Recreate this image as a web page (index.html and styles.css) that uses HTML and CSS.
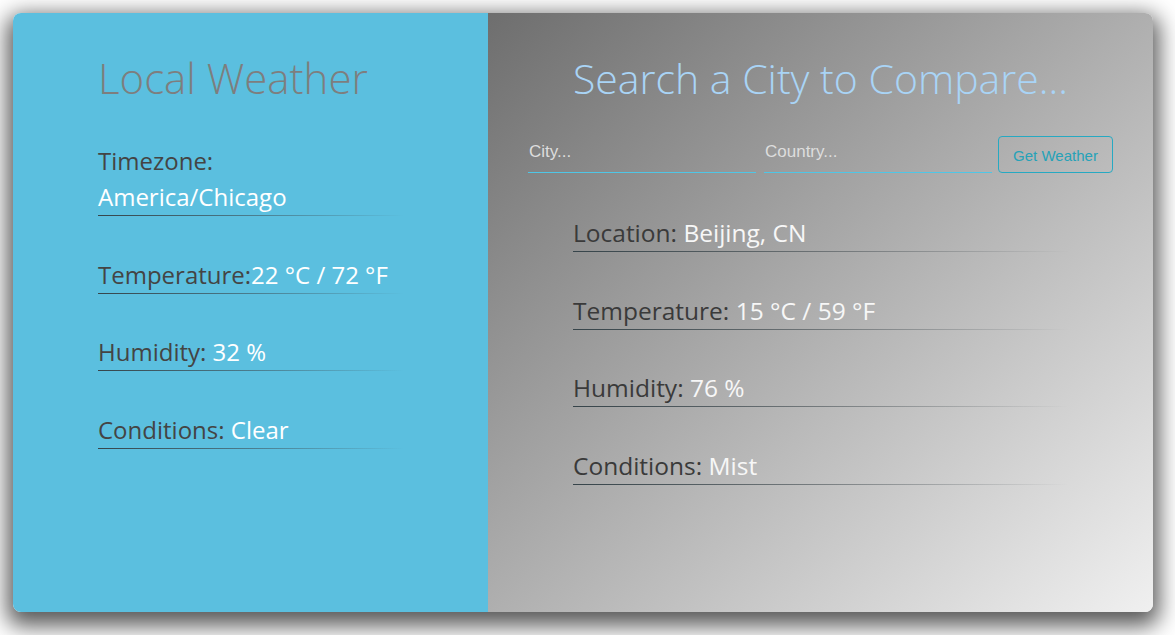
FILE: index.html
```html
<!DOCTYPE html>
<html>
<head>
<meta charset="utf-8">
<link rel="stylesheet" href="styles.css">
</head>
<body>
<div class="card">
  <section class="local">
    <h1 class="title local-title">Local Weather</h1>
    <div class="item"><span class="label">Timezone:</span><br><span class="value">America/Chicago</span></div>
    <div class="item"><span class="label">Temperature:</span><span class="value">22 °C / 72 °F</span></div>
    <div class="item"><span class="label">Humidity:</span> <span class="value">32 %</span></div>
    <div class="item"><span class="label">Conditions:</span> <span class="value">Clear</span></div>
  </section>
  <section class="compare">
    <h1 class="title compare-title">Search a City to Compare...</h1>
    <form class="search">
      <input class="field" type="text" placeholder="City...">
      <input class="field" type="text" placeholder="Country...">
      <button class="btn" type="button">Get Weather</button>
    </form>
    <div class="results">
      <div class="item item-r"><span class="label">Location:</span> <span class="value">Beijing, CN</span></div>
      <div class="item item-r"><span class="label">Temperature:</span> <span class="value">15 °C / 59 °F</span></div>
      <div class="item item-r"><span class="label">Humidity:</span> <span class="value">76 %</span></div>
      <div class="item item-r"><span class="label">Conditions:</span> <span class="value">Mist</span></div>
    </div>
  </section>
</div>
</body>
</html>
```

FILE: styles.css
```css
html, body {
  margin: 0;
  padding: 0;
  background: #ffffff;
}
body {
  box-sizing: border-box;
  height: 635px;
  padding: 13px;
  font-family: "Open Sans", "Noto Sans", sans-serif;
}
.card {
  width: 1140px;
  height: 599px;
  display: flex;
  border-radius: 8px;
  overflow: hidden;
  box-shadow: 0 8px 22px 6px rgba(0, 0, 0, 0.65);
}
.local {
  width: 475px;
  flex: none;
  box-sizing: border-box;
  background: #5bbfdf;
  padding: 41px 85px 0 85px;
}
.compare {
  flex: 1;
  box-sizing: border-box;
  background: linear-gradient(to bottom right, #6e6e6e 0%, #f0f0f0 100%);
  padding: 41px 40px 0 40px;
}
.title {
  margin: 0;
  font-weight: 300;
  font-size: 41px;
  line-height: 48px;
}
.local-title {
  color: #7e7e7e;
  font-size: 42px;
  margin-bottom: 41px;
}
.compare-title {
  color: #a9d4f6;
  text-align: center;
  margin-bottom: 34px;
}
.item {
  font-size: 24px;
  line-height: 36px;
  border-bottom: 1px solid;
  border-image: linear-gradient(to right, #36444a 0%, rgba(60, 70, 75, 0.55) 50%, rgba(60, 70, 75, 0) 100%) 1;
  margin-bottom: 40.5px;
}
.label {
  color: #444444;
}
.value {
  color: #ffffff;
}
.search {
  display: flex;
  align-items: flex-end;
  margin: 0;
}
.field {
  width: 228px;
  flex: none;
  height: 36px;
  box-sizing: border-box;
  background: transparent;
  border: none;
  border-bottom: 1px solid #4fc6e6;
  padding: 0 1px 5px 1px;
  font-family: "Liberation Sans", sans-serif;
  font-size: 17px;
  color: #eeeeee;
  outline: none;
}
.field + .field {
  margin-left: 8px;
}
.field::placeholder {
  color: #dddddd;
}
.btn {
  margin-left: 6px;
  width: 115px;
  height: 37px;
  background: transparent;
  border: 1px solid #26a9c2;
  border-radius: 4px;
  color: #26a2b8;
  font-family: "Liberation Sans", sans-serif;
  font-size: 15px;
  padding: 2px 0 0 0;
}
.results {
  padding: 42px 45px 0 45px;
}
.item-r {
  font-size: 24.5px;
  margin-bottom: 40.5px;
}
.item-r .label {
  color: #3a3a3a;
  font-weight: 500;
}
.item-r .value {
  color: #f7f7f7;
}
```
